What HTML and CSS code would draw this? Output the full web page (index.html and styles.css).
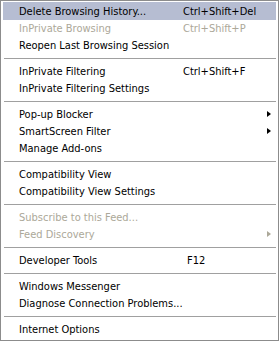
FILE: index.html
```html
<!DOCTYPE html>
<html>
<head>
<meta charset="utf-8">
<link rel="stylesheet" href="styles.css">
</head>
<body>
<div class="menu">
  <div class="item hl"><span class="label">Delete Browsing History...</span><span class="key">Ctrl+Shift+Del</span></div>
  <div class="item dis"><span class="label">InPrivate Browsing</span><span class="key">Ctrl+Shift+P</span></div>
  <div class="item"><span class="label">Reopen Last Browsing Session</span></div>
  <div class="sep"></div>
  <div class="item"><span class="label">InPrivate Filtering</span><span class="key">Ctrl+Shift+F</span></div>
  <div class="item"><span class="label">InPrivate Filtering Settings</span></div>
  <div class="sep"></div>
  <div class="item"><span class="label">Pop-up Blocker</span><span class="arrow"></span></div>
  <div class="item"><span class="label">SmartScreen Filter</span><span class="arrow"></span></div>
  <div class="item"><span class="label">Manage Add-ons</span></div>
  <div class="sep"></div>
  <div class="item"><span class="label">Compatibility View</span></div>
  <div class="item"><span class="label">Compatibility View Settings</span></div>
  <div class="sep"></div>
  <div class="item dis"><span class="label">Subscribe to this Feed...</span></div>
  <div class="item dis"><span class="label">Feed Discovery</span><span class="arrow"></span></div>
  <div class="sep"></div>
  <div class="item"><span class="label">Developer Tools</span><span class="key f12">F12</span></div>
  <div class="sep"></div>
  <div class="item"><span class="label">Windows Messenger</span></div>
  <div class="item"><span class="label">Diagnose Connection Problems...</span></div>
  <div class="sep"></div>
  <div class="item"><span class="label">Internet Options</span></div>
</div>
</body>
</html>
```
FILE: styles.css
```css
html, body {
  margin: 0;
  padding: 0;
  background: #ffffff;
}
.menu {
  width: 279px;
  height: 341px;
  box-sizing: border-box;
  border: 1px solid #8c8c8c;
  background: #ffffff;
  padding: 1px 0 0 0;
  font-family: "DejaVu Sans Condensed", "DejaVu Sans", sans-serif;
  font-size: 11px;
  color: #000000;
}
.item {
  display: flex;
  align-items: center;
  height: 17px;
  margin: 0 2px;
  padding-left: 16px;
  position: relative;
  white-space: nowrap;
}
.item.hl {
  background: #b6bdd2;
  height: 18px;
  margin-top: 0;
}
.item.dis {
  color: #aca899;
}
.label {
  width: 164px;
  flex: none;
}
.key {
  flex: none;
}
.key.f12 {
  padding-left: 4px;
}
.arrow {
  position: absolute;
  left: 264px;
  top: 5px;
  width: 0;
  height: 0;
  border-top: 3.5px solid transparent;
  border-bottom: 3.5px solid transparent;
  border-left: 4px solid #000000;
}
.item.dis .arrow {
  border-left-color: #aca899;
}
.sep {
  height: 1px;
  margin: 4px 2px 4px 3px;
  background: #a0a0a0;
}
```
